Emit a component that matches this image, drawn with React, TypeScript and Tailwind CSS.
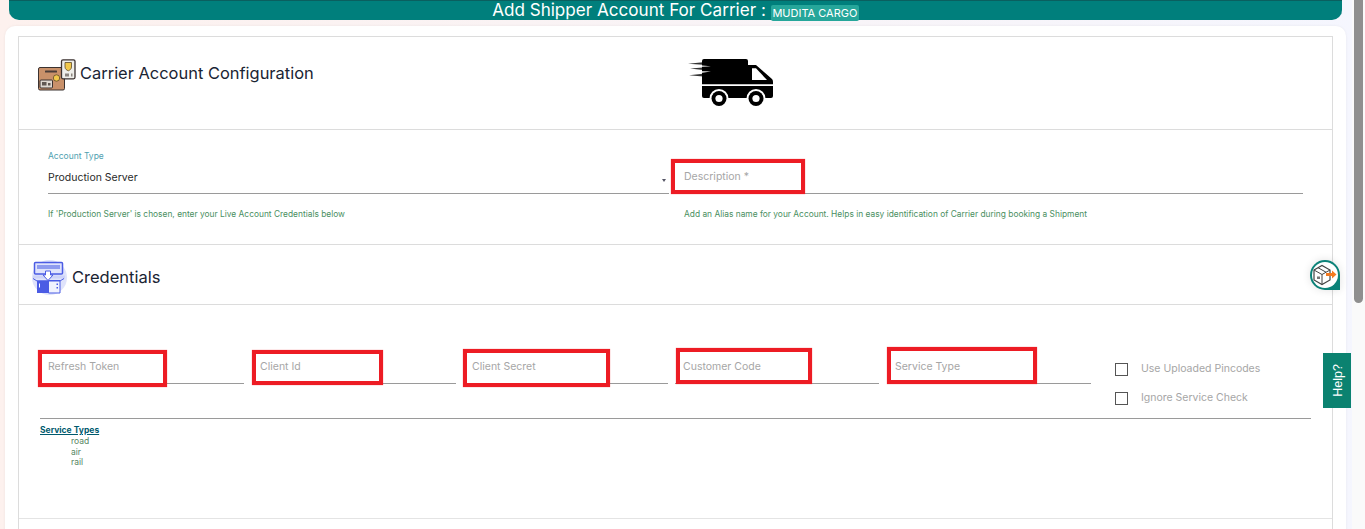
import React from "react";

function BoxIcon() {
  return (
    <svg width="38" height="32" viewBox="0 0 38 32" className="shrink-0">
      <rect x="0.5" y="8.5" width="26" height="22.500" rx="1.5" fill="#c9916a" stroke="#3b3230" strokeWidth="1" />
      <rect x="7" y="11.500" width="12" height="2" rx="0.5" fill="#4a3d38" />
      <rect x="2" y="21" width="12.500" height="8" rx="1" fill="#ded9d2" stroke="#3b3230" />
      <rect x="4" y="23" width="4.500" height="3.500" fill="#5f5853" />
      <rect x="10" y="24" width="2.500" height="2.500" fill="#5f5853" />
      <circle cx="18.500" cy="19" r="3.200" fill="#f1c84b" stroke="#5d4a2a" strokeWidth="0.8" />
      <rect x="23.500" y="0.800" width="13.500" height="19" rx="1.500" fill="#eeeeea" stroke="#3b3230" strokeWidth="1.300" />
      <path d="M27 3.500h6.500v4.500c0 2-1.700 3.200-3.200 3.800C28.700 11.200 27 10 27 8z" fill="#f1c84b" stroke="#5d4a2a" strokeWidth="0.8" />
      <rect x="27" y="14.500" width="4" height="3" fill="#8b8580" />
      <rect x="33" y="14.500" width="1.500" height="3" fill="#8b8580" />
    </svg>
  );
}

function TruckIcon() {
  return (
    <svg width="86" height="50" viewBox="0 0 86 50" className="block">
      <path d="M16 1H58a2 2 0 0 1 2 2V7H68L84 21Q85 22 85 24V26.300H14V3a2 2 0 0 1 2-2z" fill="#000" />
      <path d="M64 10.300h4l11 11.700H64z" fill="#fff" />
      <path d="M14 28H85V38a2 2 0 0 1-2 2H16a2 2 0 0 1-2-2z" fill="#000" />
      <path d="M14 7.500 23 8.200 14 8.800zM14 13.200 23 13.400 14 14.800z" fill="#fff" />
      <path d="M0 5.800 15 4.200V6.800zM2 10.500 15 9.500V12zM1 17.200 15 15.800V18.500z" fill="#000" opacity="0.8" />
      <circle cx="31" cy="40.500" r="9.500" fill="#fff" />
      <circle cx="31" cy="40.500" r="7.500" fill="#000" />
      <circle cx="31" cy="40.500" r="3.600" fill="#fff" />
      <circle cx="68" cy="40.500" r="9.500" fill="#fff" />
      <circle cx="68" cy="40.500" r="7.500" fill="#000" />
      <circle cx="68" cy="40.500" r="3.600" fill="#fff" />
    </svg>
  );
}

function CredIcon() {
  return (
    <svg width="36" height="38" viewBox="0 0 36 38" className="shrink-0">
      <circle cx="17.500" cy="19.500" r="17.500" fill="#dfe3fb" />
      <rect x="2.500" y="4.500" width="28" height="11.500" rx="1" fill="#dfe3fc" stroke="#4b5ce4" strokeWidth="1.500" />
      <rect x="5" y="7" width="23" height="4" fill="#8e9bef" />
      <path d="M1 17.500h32v3H1z" fill="#cdd3f8" />
      <path d="M13.500 13h5v4h2.500l-5 5.500-5-5.500h2.500z" fill="#fff" stroke="#4b5ce4" />
      <path d="M5 22.500h11.500V35H5z" fill="#4b5ce4" />
      <path d="M16.500 22.500H28V35H16.500z" fill="#f1f3fe" stroke="#4b5ce4" />
      <path d="M1 20.500 5 23h23l4-2.500" fill="none" stroke="#4b5ce4" strokeWidth="1" />
      <rect x="7" y="25.500" width="1" height="4" fill="#fff" />
      <rect x="24.500" y="25.500" width="1.500" height="1.500" fill="#4b5ce4" />
      <rect x="24.500" y="29" width="1.500" height="1.500" fill="#4b5ce4" />
    </svg>
  );
}

function Field({ label, boxClass, labelClass = "left-[8px]", lineClass = "" }: { label: string; boxClass: string; labelClass?: string; lineClass?: string }) {
  return (
    <div className={`relative h-[36px] border-b border-[#9a9a9a] ${lineClass}`}>
      <span className={`absolute top-[12px] text-[10.5px] leading-[14px] text-[#a6a6a6] ${labelClass}`}>{label}</span>
      <div className={`absolute border-[4px] border-[#ed1c24] shadow-[0_0_1px_rgba(237,28,36,0.6)] ${boxClass}`} />
    </div>
  );
}

export default function App() {
  return (
    <div
      className="relative h-[529px] w-[1365px] overflow-hidden bg-linear-to-r from-[#fdf1ee] to-[#f5f6fe]"
      style={{ fontFamily: "Inter, 'Noto Sans', sans-serif" }}
    >
      <div className="flex h-full">
        <main className="w-[1352px] shrink-0">
          <header className="ml-[9px] flex h-[20px] w-[1333px] items-center justify-center rounded-b-[10px] bg-[#007f7c] text-white shadow-[inset_0_1px_0_#0a5f5f]">
            <span className="text-[17.1px] leading-[20px]">Add Shipper Account For Carrier :</span>
            <span className="ml-[5px] mt-[6px] h-[16px] rounded-[2px] bg-[#26a69a] px-[1.5px] text-[11px] leading-[16px]">MUDITA CARGO</span>
          </header>

          <div className="ml-[5px] mt-[6px] h-[520px] w-[1341px] rounded-t-[10px] bg-white pl-[13px] pr-[13px] pt-[10px] shadow-[0_0_3px_rgba(0,0,0,0.06)]">
            <div className="h-[500px] w-[1315px] border border-[#dcdcdc]">
              <section className="flex h-[93px] border-b border-[#dcdcdc]">
                <div className="flex w-[650px] items-start pl-[19px] pt-[22px]">
                  <BoxIcon />
                  <h1 className="ml-[4px] mt-[2px] text-[16.45px] leading-[24px] text-[#1a2433]">Carrier Account Configuration</h1>
                </div>
                <div className="pl-[19px] pt-[21px]">
                  <TruckIcon />
                </div>
              </section>

              <section className="flex h-[115px] border-b border-[#dcdcdc] pl-[29px] pt-[21px]">
                <div className="w-[621px]">
                  <div className="text-[8.5px] leading-[11px] text-[#4f9fb0]">Account Type</div>
                  <div className="relative mt-[4px] h-[28px] border-b border-[#9a9a9a] pt-[5px] text-[10.5px] leading-[14px] text-[#2a2a2a]">
                    Production Server
                    <span className="absolute right-[3px] top-[13px] h-0 w-0 border-x-[2px] border-t-[3px] border-x-transparent border-t-[#556]" />
                  </div>
                  <p className="mt-[14px] text-[8.4px] leading-[12px] text-[#4a8f5f]">If 'Production Server' is chosen, enter your Live Account Credentials below</p>
                </div>
                <div className="ml-[4px] w-[630px]">
                  <Field label="Description *" labelClass="left-[11px]" boxClass="left-[-2px] top-[1px] h-[35px] w-[134px]" lineClass="mt-[7px]" />
                  <p className="mt-[14px] pl-[11px] text-[8.38px] leading-[12px] text-[#4a8f5f]">Add an Alias name for your Account. Helps in easy identification of Carrier during booking a Shipment</p>
                </div>
              </section>

              <section className="flex h-[60px] items-center border-b border-[#dcdcdc] pl-[13px] pt-[4px]">
                <CredIcon />
                <h2 className="ml-[4px] text-[16.5px] leading-[24px] text-[#1a2433]">Credentials</h2>
              </section>

              <section className="h-[214px] border-b border-[#e4e4e4]">
                <div className="ml-[21px] flex h-[114px] w-[1271px] border-b border-[#9a9a9a] pt-[43px]">
                  <div className="w-[204px]"><Field label="Refresh Token" boxClass="left-[-2px] top-[2px] h-[37px] w-[129px]" /></div>
                  <div className="ml-[8px] w-[204px]"><Field label="Client Id" boxClass="left-[0px] top-[2px] h-[35px] w-[131px]" /></div>
                  <div className="ml-[8px] w-[204px]"><Field label="Client Secret" boxClass="left-[-1px] top-[1px] h-[38px] w-[147px]" /></div>
                  <div className="ml-[7px] w-[204px]"><Field label="Customer Code" boxClass="left-[1px] top-[0px] h-[36px] w-[136px]" /></div>
                  <div className="ml-[8px] w-[204px]"><Field label="Service Type" boxClass="left-[0px] top-[-1px] h-[37px] w-[150px]" /></div>
                  <div className="ml-[24px] flex flex-col gap-[15px] pt-[14px]">
                    {["Use Uploaded Pincodes", "Ignore Service Check"].map((t) => (
                      <label key={t} className="flex h-[14px] items-center">
                        <span className="h-[13px] w-[13px] border border-[#555] bg-white" />
                        <span className="ml-[13px] text-[10.5px] leading-[14px] text-[#a6a6a6]">{t}</span>
                      </label>
                    ))}
                  </div>
                </div>
                <div className="ml-[21px] pt-[6px]">
                  <div className="text-[8.5px] font-bold leading-[11px] text-[#005a6e] underline">Service Types</div>
                  <ul className="ml-[31px] text-[8.5px] leading-[10.5px] text-[#55855f]">
                    <li>road</li>
                    <li>air</li>
                    <li>rail</li>
                  </ul>
                </div>
              </section>
            </div>
          </div>
        </main>

        <aside className="h-full w-[13px] bg-[#fafafa] pl-[2px]">
          <div className="h-[303px] w-[9px] rounded-b-[5px] bg-[#8f8f8f]" />
        </aside>
      </div>

      <div className="absolute left-[1310px] top-[260px] flex h-[30px] w-[30px] items-center justify-center rounded-[15px] rounded-br-none bg-[#0b8278] shadow-[0_0_8px_rgba(0,0,0,0.12)]">
        <div className="flex h-[26px] w-[26px] items-center justify-center rounded-full bg-white">
          <svg width="24" height="22" viewBox="0 0 24 22">
            <path d="M1 6l8-4.500L17 6v10l-8 4.500L1 16z" fill="#fff" stroke="#444" strokeWidth="1.200" />
            <path d="M1 6l8 4.500L17 6M9 10.500v10M5 3.700l8 4.500" fill="none" stroke="#444" strokeWidth="1" />
            <rect x="4" y="12.500" width="3" height="2.500" fill="#777" />
            <path d="M13 9h6V6.500l4.500 4-4.500 4V12h-6z" fill="#f47a20" />
          </svg>
        </div>
      </div>

      <button className="absolute left-[1323px] top-[353px] flex h-[55px] w-[28px] items-center justify-center bg-[#0b8270] pl-[2px] text-white">
        <span className="-rotate-90 whitespace-nowrap text-[12.5px] font-medium" style={{ fontFamily: "'Liberation Sans', sans-serif" }}>Help?</span>
      </button>
    </div>
  );
}
